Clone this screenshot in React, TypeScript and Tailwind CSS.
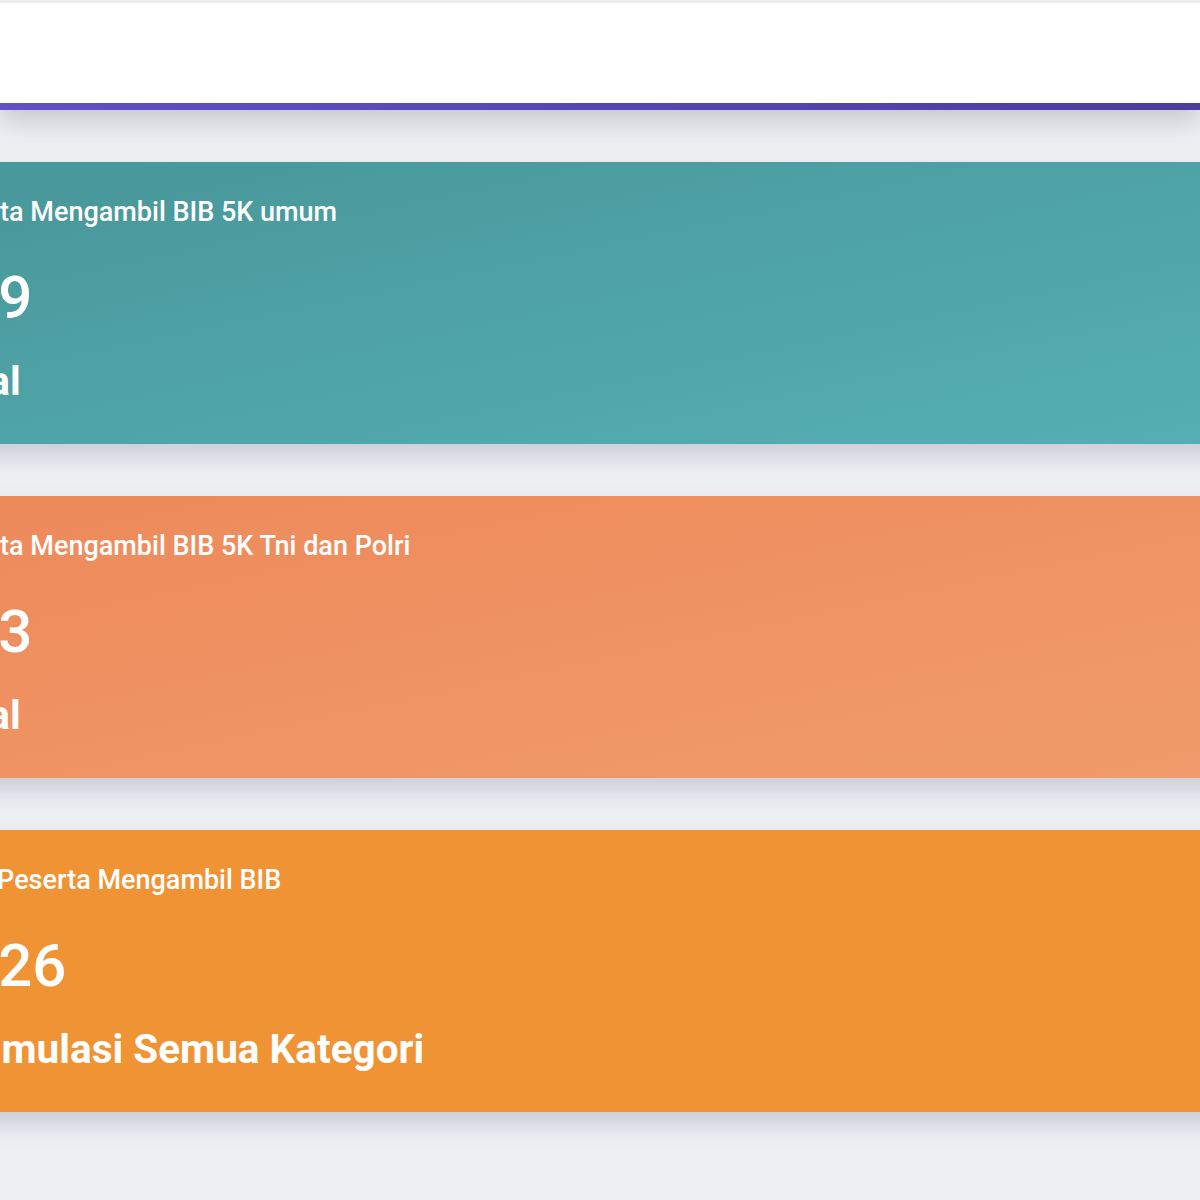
import React from "react"

type Stat = {
  title: string
  value: string
  label: string
  tone: string
}

const stats: Stat[] = [
  {
    title: "Peserta Mengambil BIB 5K umum",
    value: "179",
    label: "Total",
    tone: "bg-gradient-to-br from-[#489699] to-[#55b0b3]",
  },
  {
    title: "Peserta Mengambil BIB 5K Tni dan Polri",
    value: "113",
    label: "Total",
    tone: "bg-gradient-to-br from-[#ed895a] to-[#f19c6c]",
  },
  {
    title: "Total Peserta Mengambil BIB",
    value: "1226",
    label: "Akumulasi Semua Kategori",
    tone: "bg-[#f09334]",
  },
]

function StatCard({ title, value, label, tone }: Stat) {
  return (
    <div
      className={`${tone} -ml-[98px] -mr-[40px] h-[282px] pl-[28px] pt-[32px] text-white shadow-[0_12px_22px_rgba(40,50,70,0.18)]`}
    >
      <div className="text-[27px] font-medium leading-[36px]">{title}</div>
      <div className="mt-[36px] text-[60px] font-medium leading-[64px]">{value}</div>
      <div className="mt-[27px] text-[40.5px] font-bold leading-[48px]">{label}</div>
    </div>
  )
}

export default function App() {
  return (
    <div
      className="min-h-[1200px] overflow-hidden bg-[#edf0f3]"
      style={{ fontFamily: "Roboto, 'Liberation Sans', sans-serif" }}
    >
      <header className="relative z-10 h-[110px] border-t-[3px] border-[#ececec] bg-white shadow-[0_10px_26px_rgba(40,50,70,0.22)]">
        <div className="h-[100px]" />
        <div className="h-[7px] bg-gradient-to-r from-[#6250c4] via-[#5646b4] to-[#4d3d9c]" />
      </header>

      <main className="flex flex-col gap-[52px] pt-[52px]">
        {stats.map((s) => (
          <StatCard key={s.title} {...s} />
        ))}
      </main>
    </div>
  )
}
